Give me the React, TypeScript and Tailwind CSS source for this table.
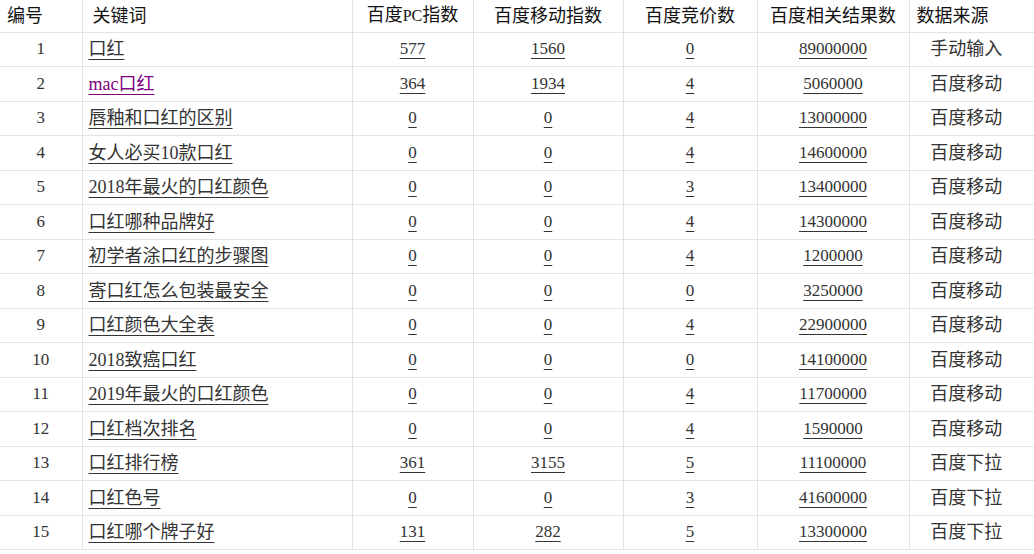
import React from "react"

type Row = {
  id: number
  kw: string
  pc: string
  mobile: string
  bid: string
  results: string
  source: string
}

const rows: Row[] = [
  { id: 1, kw: "口红", pc: "577", mobile: "1560", bid: "0", results: "89000000", source: "手动输入" },
  { id: 2, kw: "mac口红", pc: "364", mobile: "1934", bid: "4", results: "5060000", source: "百度移动" },
  { id: 3, kw: "唇釉和口红的区别", pc: "0", mobile: "0", bid: "4", results: "13000000", source: "百度移动" },
  { id: 4, kw: "女人必买10款口红", pc: "0", mobile: "0", bid: "4", results: "14600000", source: "百度移动" },
  { id: 5, kw: "2018年最火的口红颜色", pc: "0", mobile: "0", bid: "3", results: "13400000", source: "百度移动" },
  { id: 6, kw: "口红哪种品牌好", pc: "0", mobile: "0", bid: "4", results: "14300000", source: "百度移动" },
  { id: 7, kw: "初学者涂口红的步骤图", pc: "0", mobile: "0", bid: "4", results: "1200000", source: "百度移动" },
  { id: 8, kw: "寄口红怎么包装最安全", pc: "0", mobile: "0", bid: "0", results: "3250000", source: "百度移动" },
  { id: 9, kw: "口红颜色大全表", pc: "0", mobile: "0", bid: "4", results: "22900000", source: "百度移动" },
  { id: 10, kw: "2018致癌口红", pc: "0", mobile: "0", bid: "0", results: "14100000", source: "百度移动" },
  { id: 11, kw: "2019年最火的口红颜色", pc: "0", mobile: "0", bid: "4", results: "11700000", source: "百度移动" },
  { id: 12, kw: "口红档次排名", pc: "0", mobile: "0", bid: "4", results: "1590000", source: "百度移动" },
  { id: 13, kw: "口红排行榜", pc: "361", mobile: "3155", bid: "5", results: "11100000", source: "百度下拉" },
  { id: 14, kw: "口红色号", pc: "0", mobile: "0", bid: "3", results: "41600000", source: "百度下拉" },
  { id: 15, kw: "口红哪个牌子好", pc: "131", mobile: "282", bid: "5", results: "13300000", source: "百度下拉" },
]

const link = "underline underline-offset-[4px] decoration-1"
const cell = "border-l border-[#e3e3e3]"

export default function App() {
  return (
    <div
      className="w-[1034px] h-[554px] overflow-hidden bg-white text-[#333]"
      style={{ fontFamily: '"Liberation Serif", "Noto Sans CJK SC", serif' }}
    >
      <table className="w-[1034px] table-fixed border-collapse text-[18px] leading-[24px]">
        <colgroup>
          <col className="w-[82px]" />
          <col className="w-[270px]" />
          <col className="w-[121px]" />
          <col className="w-[150px]" />
          <col className="w-[134px]" />
          <col className="w-[152px]" />
          <col />
        </colgroup>
        <thead>
          <tr className="h-[32px] text-[#111] border-b border-[#e3e3e3]">
            <th className="font-normal text-left pl-[7px]">编号</th>
            <th className={`font-normal text-left pl-[10px] ${cell}`}>关键词</th>
            <th className={`font-normal text-center ${cell}`}>
              百度<span className="text-[16px]">PC</span>指数
            </th>
            <th className={`font-normal text-center ${cell}`}>百度移动指数</th>
            <th className={`font-normal text-center ${cell}`}>百度竞价数</th>
            <th className={`font-normal text-center ${cell}`}>百度相关结果数</th>
            <th className={`font-normal text-left pl-[7px] ${cell}`}>数据来源</th>
          </tr>
        </thead>
        <tbody>
          {rows.map((r) => (
            <tr
              key={r.id}
              className={`${r.id % 2 === 1 ? "h-[34px]" : "h-[35px]"} border-b border-[#e3e3e3]`}
            >
              <td className="text-center text-[17px]">{r.id}</td>
              <td className={`pl-[6px] whitespace-nowrap ${cell}`}>
                <span className={r.id === 2 ? `${link} text-[#800080]` : link}>{r.kw}</span>
              </td>
              <td className={`text-center text-[17px] ${cell}`}>
                <span className={link}>{r.pc}</span>
              </td>
              <td className={`text-center text-[17px] ${cell}`}>
                <span className={link}>{r.mobile}</span>
              </td>
              <td className={`text-center text-[17px] ${cell}`}>
                <span className={link}>{r.bid}</span>
              </td>
              <td className={`text-center text-[17px] ${cell}`}>
                <span className={link}>{r.results}</span>
              </td>
              <td className={`text-center pr-[11px] ${cell}`}>{r.source}</td>
            </tr>
          ))}
        </tbody>
      </table>
    </div>
  )
}
